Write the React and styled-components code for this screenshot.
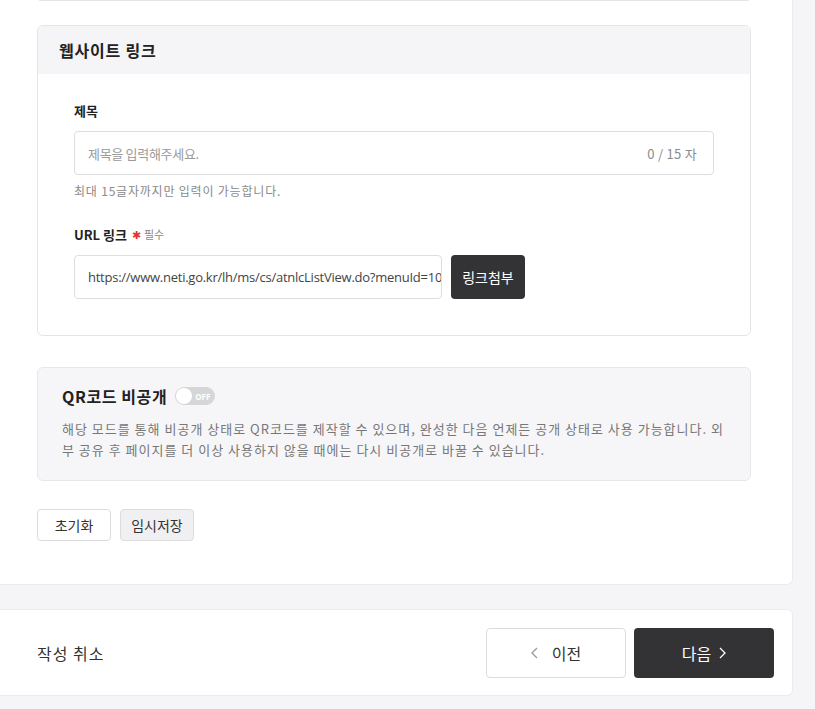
import React from 'react';
import styled, { createGlobalStyle } from 'styled-components';

const GlobalStyle = createGlobalStyle`
  html, body {
    margin: 0;
    padding: 0;
    background: #f5f5f7;
  }
  body {
    font-family: "Noto Sans CJK KR", "Noto Sans", sans-serif;
    color: #222;
  }
  * { box-sizing: border-box; }
`;

const Page = styled.div`
  width: 793px;
  display: flex;
  flex-direction: column;
  gap: 24px;
  padding-bottom: 14px;
`;

const Panel = styled.div`
  background: #fff;
  border-right: 1px solid #ebebed;
  border-bottom: 1px solid #ebebed;
  border-radius: 0 0 6px 0;
  padding: 0 41px 43px 37px;
  display: flex;
  flex-direction: column;
`;

const PrevCardTail = styled.div`
  height: 1px;
  margin: 0 2px 24px 2px;
  border-bottom: 1px solid #e4e4e6;
  border-radius: 0 0 6px 6px;
`;

const Card = styled.section`
  border: 1px solid #e4e4e6;
  border-radius: 6px;
  overflow: hidden;
`;

const CardHeader = styled.div`
  height: 48px;
  background: #f5f5f7;
  display: flex;
  align-items: center;
  padding: 0 21px;
  font-size: 16px;
  font-weight: 700;
  letter-spacing: 0.8px;
  color: #222;
`;

const CardBody = styled.div`
  padding: 26px 36px 36px 36px;
  display: flex;
  flex-direction: column;
`;

const Field = styled.div`
  display: flex;
  flex-direction: column;
  margin-bottom: ${p => p.$mb || 0}px;
`;

const Label = styled.div`
  font-size: 13px;
  font-weight: 700;
  color: #222;
  height: 20px;
  display: flex;
  align-items: center;
  gap: 5px;
  margin-bottom: 11px;
`;

const Required = styled.span`
  display: inline-flex;
  align-items: center;
  gap: 3px;
  font-size: 11px;
  font-weight: 400;
  color: #888;
`;

const Star = styled.span`
  color: #e8312f;
  font-size: 11px;
`;

const InputBox = styled.div`
  height: 44px;
  width: ${p => p.$w || '100%'};
  border: 1px solid #dedee0;
  border-radius: 4px;
  display: flex;
  align-items: center;
  padding: 0 16px 0 13px;
  font-size: 13px;
  overflow: hidden;
  white-space: nowrap;
`;

const Placeholder = styled.span`
  flex: 1;
  color: #9a9a9a;
  letter-spacing: -0.3px;
`;

const Counter = styled.span`
  color: #8a8a8a;
  font-size: 13px;
  letter-spacing: 0.3px;
`;

const UrlText = styled.span`
  color: #444;
  font-family: "Open Sans", "Noto Sans", sans-serif;
  font-size: 13px;
  letter-spacing: -0.25px;
`;

const Help = styled.div`
  margin-top: 7px;
  font-size: 12px;
  letter-spacing: 0.8px;
  color: #8a8a8a;
`;

const InputRow = styled.div`
  display: flex;
  gap: 9px;
`;

const DarkButton = styled.button`
  height: ${p => p.$h || 44}px;
  width: ${p => p.$w}px;
  background: #333335;
  color: #fff;
  border: none;
  border-radius: 4px;
  font-family: inherit;
  font-size: ${p => p.$fs || 14}px;
  display: flex;
  align-items: center;
  justify-content: center;
  gap: 8px;
`;

const QrBox = styled.section`
  margin-top: 31px;
  background: #f6f6f8;
  border: 1px solid #e8e8ea;
  border-radius: 6px;
  padding: 16px 24px 20px 24px;
`;

const QrTitle = styled.div`
  display: flex;
  align-items: center;
  gap: 8px;
  font-size: 16px;
  font-weight: 700;
  letter-spacing: 0.6px;
  color: #222;
  height: 24px;
`;

const Toggle = styled.span`
  width: 40px;
  height: 18px;
  border-radius: 9px;
  background: #d6d6d8;
  display: inline-flex;
  align-items: center;
  padding: 0 1px;
  gap: 3px;
  letter-spacing: 0;
`;

const Knob = styled.span`
  width: 16px;
  height: 16px;
  border-radius: 50%;
  background: #fff;
`;

const ToggleText = styled.span`
  font-family: "Noto Sans", sans-serif;
  font-size: 8px;
  font-weight: 700;
  color: #fff;
`;

const QrDesc = styled.p`
  margin: 10px 0 0 0;
  font-size: 13px;
  line-height: 21px;
  letter-spacing: 1px;
  color: #777;
`;

const ActionRow = styled.div`
  margin-top: 28px;
  display: flex;
  gap: 9px;
`;

const SmallButton = styled.button`
  width: 74px;
  height: 32px;
  border: 1px solid #dcdcde;
  border-radius: 4px;
  background: ${p => (p.$gray ? '#f0f0f2' : '#fff')};
  font-family: inherit;
  font-size: 14px;
  color: #333;
`;

const Footer = styled.div`
  background: #fff;
  border-right: 1px solid #ebebed;
  border-top: 1px solid #ebebed;
  border-bottom: 1px solid #ebebed;
  border-radius: 0 6px 6px 0;
  height: 87px;
  display: flex;
  align-items: center;
  justify-content: space-between;
  padding: 0 18px 0 37px;
`;

const CancelText = styled.span`
  font-size: 16px;
  letter-spacing: 1px;
  color: #333;
`;

const NavGroup = styled.div`
  display: flex;
  gap: 8px;
`;

const OutlineButton = styled.button`
  width: 140px;
  height: 50px;
  background: #fff;
  border: 1px solid #dcdcde;
  border-radius: 4px;
  font-family: inherit;
  font-size: 16px;
  color: #333;
  display: flex;
  align-items: center;
  justify-content: center;
  gap: 14px;
`;

const Chevron = ({ dir, color }) => (
  <svg width="7" height="12" viewBox="0 0 7 12" fill="none">
    <polyline
      points={dir === 'left' ? '6,1 1,6 6,11' : '1,1 6,6 1,11'}
      stroke={color}
      strokeWidth="1.3"
    />
  </svg>
);

export default function App() {
  return (
    <>
      <GlobalStyle />
      <Page>
        <Panel>
          <PrevCardTail />
          <Card>
            <CardHeader>웹사이트 링크</CardHeader>
            <CardBody>
              <Field $mb={25}>
                <Label>제목</Label>
                <InputBox>
                  <Placeholder>제목을 입력해주세요.</Placeholder>
                  <Counter>0 / 15 자</Counter>
                </InputBox>
                <Help>최대 15글자까지만 입력이 가능합니다.</Help>
              </Field>
              <Field>
                <Label>
                  URL 링크
                  <Required>
                    <Star>✱</Star>필수
                  </Required>
                </Label>
                <InputRow>
                  <InputBox $w="368px">
                    <UrlText>https://www.neti.go.kr/lh/ms/cs/atnlcListView.do?menuId=10</UrlText>
                  </InputBox>
                  <DarkButton $w={74}>링크첨부</DarkButton>
                </InputRow>
              </Field>
            </CardBody>
          </Card>

          <QrBox>
            <QrTitle>
              QR코드 비공개
              <Toggle>
                <Knob />
                <ToggleText>OFF</ToggleText>
              </Toggle>
            </QrTitle>
            <QrDesc>
              해당 모드를 통해 비공개 상태로 QR코드를 제작할 수 있으며, 완성한 다음 언제든 공개 상태로 사용 가능합니다. 외부 공유 후 페이지를 더 이상 사용하지 않을 때에는 다시 비공개로 바꿀 수 있습니다.
            </QrDesc>
          </QrBox>

          <ActionRow>
            <SmallButton>초기화</SmallButton>
            <SmallButton $gray>임시저장</SmallButton>
          </ActionRow>
        </Panel>

        <Footer>
          <CancelText>작성 취소</CancelText>
          <NavGroup>
            <OutlineButton>
              <Chevron dir="left" color="#999" />
              이전
            </OutlineButton>
            <DarkButton $w={140} $h={50} $fs={16}>
              다음
              <Chevron dir="right" color="#fff" />
            </DarkButton>
          </NavGroup>
        </Footer>
      </Page>
    </>
  );
}
